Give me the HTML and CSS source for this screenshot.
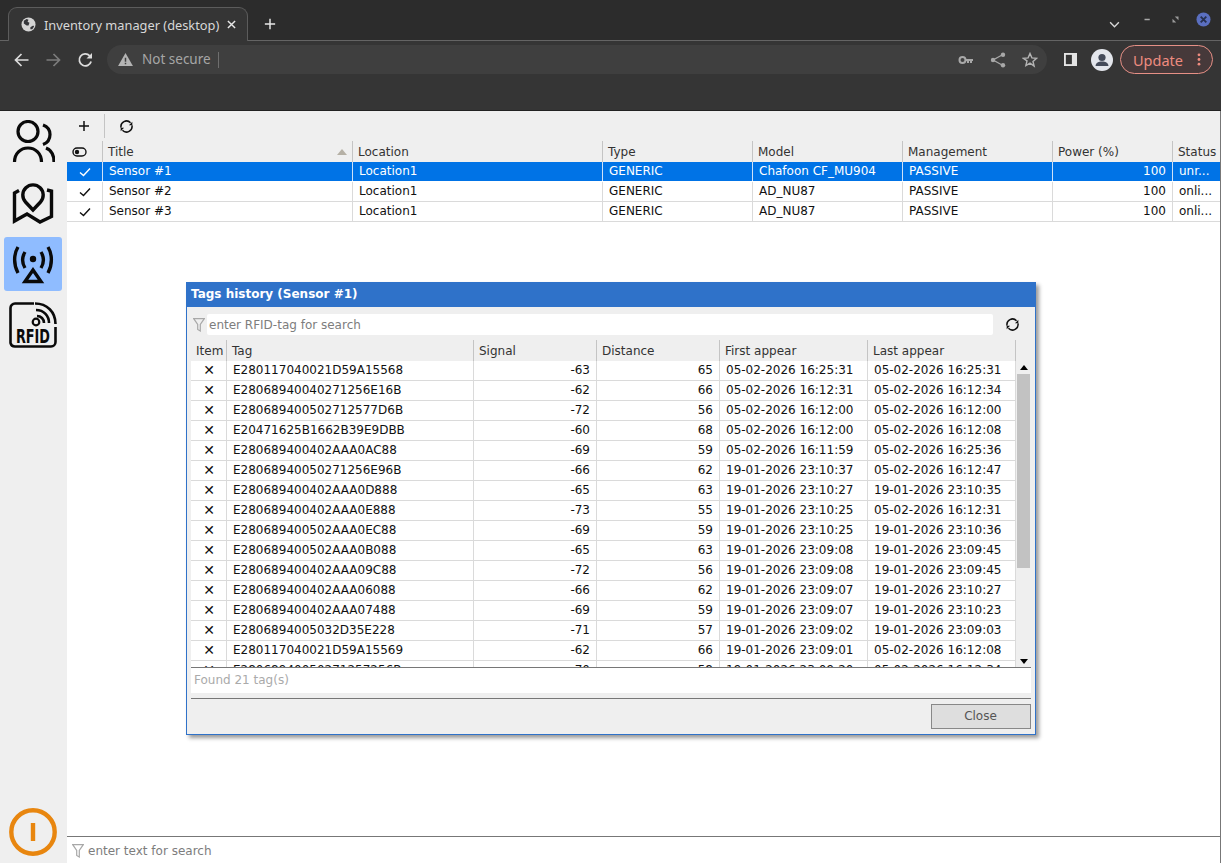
FILE: index.html
```html
<!DOCTYPE html>
<html lang="en">
<head>
<meta charset="utf-8">
<title>Inventory manager (desktop)</title>
<link rel="stylesheet" href="styles.css">
</head>
<body>
<div class="browser">
  <div class="tabstrip">
    <div class="tab">
      <svg class="ic16" viewBox="0 0 16 16"><circle cx="8" cy="8" r="7.500" fill="#d4d4d4"/><path d="M3 4l3-2 2 1-1 2 2 1-1 3H6L3 7zM10 11l3-2 1 1-2 3-2 0z" fill="#35363a"/></svg>
      <span class="tab-title">Inventory manager (desktop)</span>
      <svg class="tab-x" viewBox="0 0 10 10"><path d="M1 1l8 8M9 1l-8 8" stroke="#e8e8e8" stroke-width="1.600"/></svg>
    </div>
    <svg class="newtab" viewBox="0 0 14 14"><path d="M7 1v12M1 7h12" stroke="#e8e8e8" stroke-width="1.700"/></svg>
    <div class="spring"></div>
    <svg class="tabsearch" viewBox="0 0 12 8"><path d="M1 1.500l5 5 5-5" fill="none" stroke="#d8d8d8" stroke-width="1.600"/></svg>
    <div class="winbtns">
      <svg class="winbtn" viewBox="0 0 12 12"><path d="M2 6h7" stroke="#a8a8a8" stroke-width="2"/></svg>
      <svg class="winbtn" viewBox="0 0 12 12"><path d="M5 2h5v5zM2 5v5h5z" fill="#9a9a9a"/></svg>
      <svg class="winclose" viewBox="0 0 16 16"><circle cx="8" cy="8" r="7.500" fill="#5a6fc0"/><path d="M5 5l6 6M11 5l-6 6" stroke="#26304f" stroke-width="2"/></svg>
    </div>
  </div>
  <div class="toolbar">
    <svg class="nav" viewBox="0 0 16 16"><path d="M15 8H2M8 2L2 8l6 6" fill="none" stroke="#dcdcdc" stroke-width="1.700"/></svg>
    <svg class="nav" viewBox="0 0 16 16"><path d="M1 8h13M8 2l6 6-6 6" fill="none" stroke="#7c7c7c" stroke-width="1.700"/></svg>
    <svg class="nav" viewBox="0 0 16 16"><path d="M13.600 9.500A6 6 0 1 1 12.200 3.800" fill="none" stroke="#dcdcdc" stroke-width="1.800"/><path d="M14.500 1v5.500H9z" fill="#dcdcdc"/></svg>
    <div class="omnibox">
      <svg class="warn" viewBox="0 0 16 14"><path d="M8 0l8 14H0z" fill="#b4b4b4"/><path d="M7.200 5h1.600v4.500H7.200zM7.200 10.500h1.600V12H7.200z" fill="#3f3f3f"/></svg>
      <span class="insecure">Not secure</span>
      <span class="caret"></span>
      <div class="spring"></div>
      <svg class="omni-ic" viewBox="0 0 16 16"><circle cx="4.500" cy="8" r="3" fill="none" stroke="#a8a8a8" stroke-width="2"/><path d="M7 7h8v2h-1v2h-2V9h-1v2H9V9H7z" fill="#a8a8a8"/></svg>
      <svg class="omni-ic" viewBox="0 0 16 16"><path d="M13 2.500L3 8l10 5.500" fill="none" stroke="#a8a8a8" stroke-width="1.300"/><circle cx="13" cy="2.800" r="2.200" fill="#a8a8a8"/><circle cx="3" cy="8" r="2.200" fill="#a8a8a8"/><circle cx="13" cy="13.200" r="2.200" fill="#a8a8a8"/></svg>
      <svg class="omni-ic" viewBox="0 0 16 16"><path d="M8 1.500l1.900 4.400 4.700.4-3.600 3.100 1.100 4.700L8 11.100l-4.100 2.500L5 8.900 1.400 6.300l4.700-.4z" fill="none" stroke="#b4b4b4" stroke-width="1.400"/></svg>
    </div>
    <svg class="panel" viewBox="0 0 14 14"><path d="M0 0h14v14H0z" fill="#e4e4e4"/><path d="M2 2h6.500v10H2z" fill="#353535"/></svg>
    <svg class="avatar" viewBox="0 0 22 22"><circle cx="11" cy="11" r="11" fill="#e3e6ec"/><circle cx="11" cy="8.500" r="3.600" fill="#444b5a"/><path d="M4.500 17c.5-3.500 3-4.500 6.500-4.500s6 1 6.500 4.500z" fill="#444b5a"/></svg>
    <div class="update">
      <span>Update</span>
      <svg class="dots" viewBox="0 0 4 14"><circle cx="2" cy="2" r="1.500" fill="#ee8c80"/><circle cx="2" cy="7" r="1.500" fill="#ee8c80"/><circle cx="2" cy="12" r="1.500" fill="#ee8c80"/></svg>
    </div>
  </div>
  <div class="infobar"></div>
</div>

<div class="app">
  <aside class="sidebar">
    <div class="side-item">
      <svg class="side-ic" viewBox="0 0 44 44"><g fill="none" stroke="#0a0a0a" stroke-width="3.200"><circle cx="17" cy="11.500" r="10"/><path d="M3.500 42c0-8.500 6-14 13.500-14s13.500 5.500 13.500 14"/><path d="M32 5c4 1.500 7 4.500 7 9.500s-3 8.500-7 10"/><path d="M35 28c5 2 8 7 8 14"/></g></svg>
    </div>
    <div class="side-item">
      <svg class="side-ic" viewBox="0 0 44 44"><g fill="none" stroke="#0a0a0a" stroke-width="3.400"><path d="M22 29l-7.500-8a10.200 10.200 0 1 1 15 0z"/><path d="M8 9.500L3.500 12V40L16 33 29 41 40.500 35.500V10L36 9"/></g></svg>
    </div>
    <div class="side-item side-active">
      <svg class="side-ic" viewBox="0 0 44 44"><g fill="none" stroke="#0a0a0a" stroke-width="3.400"><path d="M7 5c-4.500 7.500-4.500 18 0 26M37 5c4.500 7.500 4.500 18 0 26"/><path d="M14 10c-3 5-3 11 0 16M30 10c3 5 3 11 0 16"/><path d="M22 28l8 11.500H14z"/></g><circle cx="22" cy="17" r="3.200" fill="#0a0a0a"/></svg>
    </div>
    <div class="side-item">
      <svg class="side-ic rfid" viewBox="0 0 48 46"><g fill="none" stroke="#0a0a0a" stroke-width="2.600"><path d="M25 1.500H6a4.500 4.500 0 0 0-4.500 4.500v35A4.500 4.500 0 0 0 6 44.500h36a4.500 4.500 0 0 0 4.500-4.500V25"/><path d="M26 1.500C38 1.500 46.500 10 46.500 22"/><path d="M27 8c8 0 13 6 13 13"/><path d="M28 14c4 0 7 3 7 7"/></g><circle cx="27" cy="20" r="3.300" fill="none" stroke="#0a0a0a" stroke-width="2.200"/><text x="24" y="41" class="rfid-text" text-anchor="middle" textLength="34" lengthAdjust="spacingAndGlyphs">RFID</text></svg>
    </div>
    <div class="spring"></div>
    <svg class="power" viewBox="0 0 48 48"><circle cx="24" cy="24" r="21.700" fill="none" stroke="#e8860f" stroke-width="4.400"/><path d="M24 15v18" stroke="#e8860f" stroke-width="4.400"/></svg>
  </aside>

  <main class="content">
    <div class="actions">
      <svg class="act-plus" viewBox="0 0 12 12"><path d="M6 1v10M1 6h10" stroke="#111" stroke-width="1.500"/></svg>
      <span class="act-sep"></span>
      <svg class="refresh" viewBox="0 0 16 16"><path d="M2.200 9.200A5.900 5.900 0 0 1 12.300 4" fill="none" stroke="#111" stroke-width="1.600"/><path d="M13.800 6.800A5.900 5.900 0 0 1 3.700 12" fill="none" stroke="#111" stroke-width="1.600"/><path d="M14.200 3v3.600h-3.600zM1.800 13V9.400h3.600z" fill="#111"/></svg>
    </div>

    <div class="mrow mhead">
      <div class="hcell hcell-ic"><svg class="toggle" viewBox="0 0 15 10"><rect x="1" y="1" width="13" height="8" rx="4" fill="none" stroke="#111" stroke-width="1.400"/><circle cx="5" cy="5" r="2.200" fill="#111"/></svg></div>
      <div class="hcell hcell-sort">Title<svg class="sort" viewBox="0 0 10 6"><path d="M5 0l5 6H0z" fill="#b5b0a5"/></svg></div>
      <div class="hcell">Location</div>
      <div class="hcell">Type</div>
      <div class="hcell">Model</div>
      <div class="hcell">Management</div>
      <div class="hcell">Power (%)</div>
      <div class="hcell hcell-end">Status</div>
    </div>
    <div class="mrow row row-sel">
      <div class="cell cell-ic"><svg class="chk" viewBox="0 0 12 10"><path d="M1 5.500l3.500 3L11 1.500" fill="none" stroke="#fff" stroke-width="1.400"/></svg></div>
      <div class="cell">Sensor #1</div><div class="cell">Location1</div><div class="cell">GENERIC</div><div class="cell">Chafoon CF_MU904</div><div class="cell">PASSIVE</div><div class="cell cell-num">100</div><div class="cell cell-end">unr...</div>
    </div>
    <div class="mrow row">
      <div class="cell cell-ic"><svg class="chk" viewBox="0 0 12 10"><path d="M1 5.500l3.500 3L11 1.500" fill="none" stroke="#111" stroke-width="1.400"/></svg></div>
      <div class="cell">Sensor #2</div><div class="cell">Location1</div><div class="cell">GENERIC</div><div class="cell">AD_NU87</div><div class="cell">PASSIVE</div><div class="cell cell-num">100</div><div class="cell cell-end">onli...</div>
    </div>
    <div class="mrow row">
      <div class="cell cell-ic"><svg class="chk" viewBox="0 0 12 10"><path d="M1 5.500l3.500 3L11 1.500" fill="none" stroke="#111" stroke-width="1.400"/></svg></div>
      <div class="cell">Sensor #3</div><div class="cell">Location1</div><div class="cell">GENERIC</div><div class="cell">AD_NU87</div><div class="cell">PASSIVE</div><div class="cell cell-num">100</div><div class="cell cell-end">onli...</div>
    </div>

    <div class="spring"></div>
    <div class="searchbar">
      <svg class="funnel" viewBox="0 0 12 14"><path d="M.7.700h10.600L7.300 6.500v6.500L4.700 11.500V6.500z" fill="none" stroke="#a8a8a8" stroke-width="1.200"/></svg>
      <span class="placeholder">enter text for search</span>
    </div>
  </main>

  <section class="dialog">
    <header class="dlg-title">Tags history (Sensor #1)</header>
    <div class="dlg-body">
      <div class="dlg-search">
        <svg class="funnel" viewBox="0 0 12 14"><path d="M.7.700h10.600L7.300 6.500v6.500L4.700 11.500V6.500z" fill="none" stroke="#a8a8a8" stroke-width="1.200"/></svg>
        <div class="dlg-input">enter RFID-tag for search</div>
        <svg class="refresh dlg-refresh" viewBox="0 0 16 16"><path d="M2.200 9.200A5.900 5.900 0 0 1 12.300 4" fill="none" stroke="#111" stroke-width="1.600"/><path d="M13.800 6.800A5.900 5.900 0 0 1 3.700 12" fill="none" stroke="#111" stroke-width="1.600"/><path d="M14.200 3v3.600h-3.600zM1.800 13V9.400h3.600z" fill="#111"/></svg>
      </div>
      <div class="hist">
        <div class="hrow mhead">
          <div class="hcell">Item</div><div class="hcell">Tag</div><div class="hcell">Signal</div><div class="hcell">Distance</div><div class="hcell">First appear</div><div class="hcell">Last appear</div><div class="hfill"></div>
        </div>
        <div class="hist-body">
          <div class="hist-rows">
            <div class="hrow row"><div class="cell cell-x">✕</div><div class="cell">E280117040021D59A15568</div><div class="cell cell-num">-63</div><div class="cell cell-num">65</div><div class="cell">05-02-2026 16:25:31</div><div class="cell">05-02-2026 16:25:31</div></div>
            <div class="hrow row"><div class="cell cell-x">✕</div><div class="cell">E28068940040271256E16B</div><div class="cell cell-num">-62</div><div class="cell cell-num">66</div><div class="cell">05-02-2026 16:12:31</div><div class="cell">05-02-2026 16:12:34</div></div>
            <div class="hrow row"><div class="cell cell-x">✕</div><div class="cell">E280689400502712577D6B</div><div class="cell cell-num">-72</div><div class="cell cell-num">56</div><div class="cell">05-02-2026 16:12:00</div><div class="cell">05-02-2026 16:12:00</div></div>
            <div class="hrow row"><div class="cell cell-x">✕</div><div class="cell">E20471625B1662B39E9DBB</div><div class="cell cell-num">-60</div><div class="cell cell-num">68</div><div class="cell">05-02-2026 16:12:00</div><div class="cell">05-02-2026 16:12:08</div></div>
            <div class="hrow row"><div class="cell cell-x">✕</div><div class="cell">E280689400402AAA0AC88</div><div class="cell cell-num">-69</div><div class="cell cell-num">59</div><div class="cell">05-02-2026 16:11:59</div><div class="cell">05-02-2026 16:25:36</div></div>
            <div class="hrow row"><div class="cell cell-x">✕</div><div class="cell">E28068940050271256E96B</div><div class="cell cell-num">-66</div><div class="cell cell-num">62</div><div class="cell">19-01-2026 23:10:37</div><div class="cell">05-02-2026 16:12:47</div></div>
            <div class="hrow row"><div class="cell cell-x">✕</div><div class="cell">E280689400402AAA0D888</div><div class="cell cell-num">-65</div><div class="cell cell-num">63</div><div class="cell">19-01-2026 23:10:27</div><div class="cell">19-01-2026 23:10:35</div></div>
            <div class="hrow row"><div class="cell cell-x">✕</div><div class="cell">E280689400402AAA0E888</div><div class="cell cell-num">-73</div><div class="cell cell-num">55</div><div class="cell">19-01-2026 23:10:25</div><div class="cell">05-02-2026 16:12:31</div></div>
            <div class="hrow row"><div class="cell cell-x">✕</div><div class="cell">E280689400502AAA0EC88</div><div class="cell cell-num">-69</div><div class="cell cell-num">59</div><div class="cell">19-01-2026 23:10:25</div><div class="cell">19-01-2026 23:10:36</div></div>
            <div class="hrow row"><div class="cell cell-x">✕</div><div class="cell">E280689400502AAA0B088</div><div class="cell cell-num">-65</div><div class="cell cell-num">63</div><div class="cell">19-01-2026 23:09:08</div><div class="cell">19-01-2026 23:09:45</div></div>
            <div class="hrow row"><div class="cell cell-x">✕</div><div class="cell">E280689400402AAA09C88</div><div class="cell cell-num">-72</div><div class="cell cell-num">56</div><div class="cell">19-01-2026 23:09:08</div><div class="cell">19-01-2026 23:09:45</div></div>
            <div class="hrow row"><div class="cell cell-x">✕</div><div class="cell">E280689400402AAA06088</div><div class="cell cell-num">-66</div><div class="cell cell-num">62</div><div class="cell">19-01-2026 23:09:07</div><div class="cell">19-01-2026 23:10:27</div></div>
            <div class="hrow row"><div class="cell cell-x">✕</div><div class="cell">E280689400402AAA07488</div><div class="cell cell-num">-69</div><div class="cell cell-num">59</div><div class="cell">19-01-2026 23:09:07</div><div class="cell">19-01-2026 23:10:23</div></div>
            <div class="hrow row"><div class="cell cell-x">✕</div><div class="cell">E2806894005032D35E228</div><div class="cell cell-num">-71</div><div class="cell cell-num">57</div><div class="cell">19-01-2026 23:09:02</div><div class="cell">19-01-2026 23:09:03</div></div>
            <div class="hrow row"><div class="cell cell-x">✕</div><div class="cell">E280117040021D59A15569</div><div class="cell cell-num">-62</div><div class="cell cell-num">66</div><div class="cell">19-01-2026 23:09:01</div><div class="cell">05-02-2026 16:12:08</div></div>
            <div class="hrow row"><div class="cell cell-x">✕</div><div class="cell">E28068940050271257256B</div><div class="cell cell-num">-70</div><div class="cell cell-num">58</div><div class="cell">19-01-2026 23:09:20</div><div class="cell">05-02-2026 16:12:34</div></div>
          </div>
          <div class="scroll">
            <svg class="arrow" viewBox="0 0 8 5"><path d="M4 0l4 5H0z" fill="#000"/></svg>
            <div class="thumb"></div>
            <div class="spring"></div>
            <svg class="arrow" viewBox="0 0 8 5"><path d="M4 5l4-5H0z" fill="#000"/></svg>
          </div>
        </div>
      </div>
      <div class="found">Found 21 tag(s)</div>
      <div class="dlg-foot"><button class="close-btn" type="button">Close</button></div>
    </div>
  </section>
</div>
</body>
</html>
```

FILE: styles.css
```css
* { box-sizing: border-box; }
html, body { margin: 0; height: 100%; overflow: hidden; }
body { display: flex; flex-direction: column; font-family: "DejaVu Sans", sans-serif; font-size: 12px; color: #111; background: #fff; }
.spring { flex: 1; }

.browser { flex: none; height: 111px; background: #353535; font-family: "Noto Sans", sans-serif; display: flex; flex-direction: column; }
.tabstrip { height: 41px; background: #2c2c2c; border-bottom: 1px solid #646464; padding-left: 8px; display: flex; align-items: flex-start; }
.tab { width: 240px; height: 34px; margin-top: 7px; background: #353535; border: 1px solid #5c5c5c; border-bottom: none; border-radius: 9px 9px 0 0; display: flex; align-items: center; padding: 0 11px 0 12px; }
.ic16 { width: 15px; height: 15px; flex: none; }
.tab-title { margin-left: 8px; flex: 1; color: #d8d8d8; font-size: 12.8px; white-space: nowrap; }
.tab-x { width: 9px; height: 9px; flex: none; }
.newtab { width: 12px; height: 12px; margin: 18px 0 0 16px; }
.tabsearch { width: 11px; height: 7px; margin: 21px 23px 0 0; }
.winbtns { display: flex; align-items: center; gap: 19px; margin: 12px 10px 0 0; }
.winbtn { width: 9px; height: 9px; }
.winclose { width: 15px; height: 15px; margin-left: -3px; }

.toolbar { height: 37px; display: flex; align-items: center; padding-left: 13px; }
.nav { width: 17px; height: 16px; margin-right: 15px; flex: none; }
.nav:nth-child(3) { margin-right: 13px; }
.omnibox { width: 940px; height: 29px; margin: 0 13px 0 0; border-radius: 15px; background: #3f3f3f; display: flex; align-items: center; padding: 0 9px 0 10px; flex: none; }
.warn { width: 15px; height: 13px; margin-left: 1px; }
.insecure { margin: 0 0 2px 9px; color: #a6a6a6; font-size: 13.5px; }
.caret { width: 1px; height: 16px; background: #6e6e6e; margin-left: 7px; }
.omni-ic { width: 16px; height: 16px; margin-left: 16px; }
.panel { width: 13px; height: 13px; flex: none; margin-left: 4px; }
.avatar { width: 22px; height: 22px; margin-left: 14px; flex: none; }
.update { width: 93px; height: 29px; margin-left: 7px; border: 1px solid #e69086; border-radius: 15px; background: #46393a; color: #ee8c80; font-size: 14.5px; display: flex; align-items: center; padding-left: 12px; }
.dots { width: 4px; height: 13px; margin-left: 14px; }
.infobar { flex: 1; border-bottom: 1px solid #222; }

.app { flex: 1; min-height: 0; display: flex; position: relative; border-right: 1px solid #777; }
.sidebar { width: 67px; flex: none; background: #efefef; display: flex; flex-direction: column; align-items: center; padding: 4px 1px 7px 0; }
.side-item { width: 58px; height: 54px; flex: none; display: flex; align-items: center; justify-content: center; margin-bottom: 7px; border-radius: 3px; }
.side-active { background: #8fbcff; }
.side-ic { width: 44px; height: 44px; }
.rfid { width: 48px; height: 46px; }
.rfid-text { font-family: "DejaVu Sans", sans-serif; font-weight: 700; font-size: 19px; fill: #0a0a0a; }
.power { width: 48px; height: 48px; flex: none; }

.content { flex: 1; min-width: 0; display: flex; flex-direction: column; }
.actions { height: 30px; flex: none; background: #efefef; display: flex; align-items: center; padding-left: 11px; }
.act-plus { width: 12px; height: 12px; }
.act-sep { width: 1px; height: 24px; background: #c4c4c4; margin: 0 14px 0 14px; }
.refresh { width: 15px; height: 15px; flex: none; }

.mrow { display: grid; grid-template-columns: 36px 250px 250px 150px 150px 150px 120px 47px; }
.hrow { display: grid; grid-template-columns: 36px 247px 123px 123px 148px 148px 15px; }
.mhead { height: 21px; background: #efefef; }
.hcell { border-right: 1px solid #c4c4c4; padding-left: 5px; line-height: 22px; color: #333; white-space: nowrap; overflow: hidden; }
.hcell-ic { display: flex; align-items: center; padding-left: 5px; }
.hcell-sort { display: flex; align-items: center; justify-content: space-between; padding-right: 5px; }
.hcell-end { border-right: none; }
.hfill { background: #efefef; }
.toggle { width: 15px; height: 10px; }
.sort { width: 10px; height: 6px; }

.row { height: 20px; background: #fff; border-bottom: 1px solid #dadada; }
.cell { border-right: 1px solid #dadada; padding: 0 6px; line-height: 18px; color: #111; white-space: pre; overflow: hidden; }
.cell-end { border-right: none; }
.cell-num { text-align: right; }
.cell-ic { display: flex; align-items: center; justify-content: center; }
.cell-x { text-align: center; padding: 0 0 0 1px; font-size: 14px; }
.chk { width: 12px; height: 10px; }
.row-sel { background: #0073e6; border-bottom-color: #fff; }
.row-sel .cell { color: #fff; border-right-color: #cfe2f8; }

.searchbar { height: 27px; flex: none; border-top: 1px solid #777; display: flex; align-items: center; padding: 1px 0 0 5px; }
.funnel { width: 12px; height: 14px; flex: none; }
.placeholder { margin-left: 4px; color: #7d7d7d; }

.dialog { position: absolute; left: 186px; top: 171px; width: 850px; height: 453px; border: 1px solid #2f72c9; border-top: none; background: #efefef; box-shadow: 3px 3px 4px rgba(0,0,0,.4); display: flex; flex-direction: column; }
.dlg-title { height: 25px; flex: none; background: #2f72c9; color: #fff; font-weight: 700; font-size: 12px; line-height: 24px; padding-left: 4px; }
.dlg-body { flex: 1; min-height: 0; padding: 7px 4px 5px; display: flex; flex-direction: column; }
.dlg-search { height: 21px; flex: none; display: flex; align-items: center; padding-left: 2px; }
.dlg-input { width: 786px; height: 21px; margin-left: 2px; background: #fff; border-radius: 2px; color: #7d7d7d; line-height: 22px; padding-left: 2px; }
.dlg-refresh { margin-left: 12px; }
.hist { height: 328px; margin-top: 5px; flex: none; overflow: hidden; border-bottom: 1px solid #777; }
.hist-body { display: flex; height: 306px; }
.hist-rows { width: 825px; flex: none; overflow: hidden; }
.hist-rows .hrow { grid-template-columns: 36px 247px 123px 123px 148px 148px; }
.scroll { flex: 1; background: #efefef; display: flex; flex-direction: column; align-items: center; padding: 4px 0 3px; }
.arrow { width: 8px; height: 5px; flex: none; }
.thumb { width: 13px; height: 194px; margin-top: 4px; background: #c2c2c2; }
.found { height: 25px; flex: none; background: #fff; color: #aaa; line-height: 24px; padding-left: 3px; }
.dlg-foot { margin-top: 5px; border-top: 1px solid #777; padding-top: 5px; display: flex; justify-content: flex-end; }
.close-btn { width: 100px; height: 25px; background: #dedede; border: 1px solid #888; color: #555; font: 12px "DejaVu Sans", sans-serif; padding: 0 1px 2px 0; }
```
